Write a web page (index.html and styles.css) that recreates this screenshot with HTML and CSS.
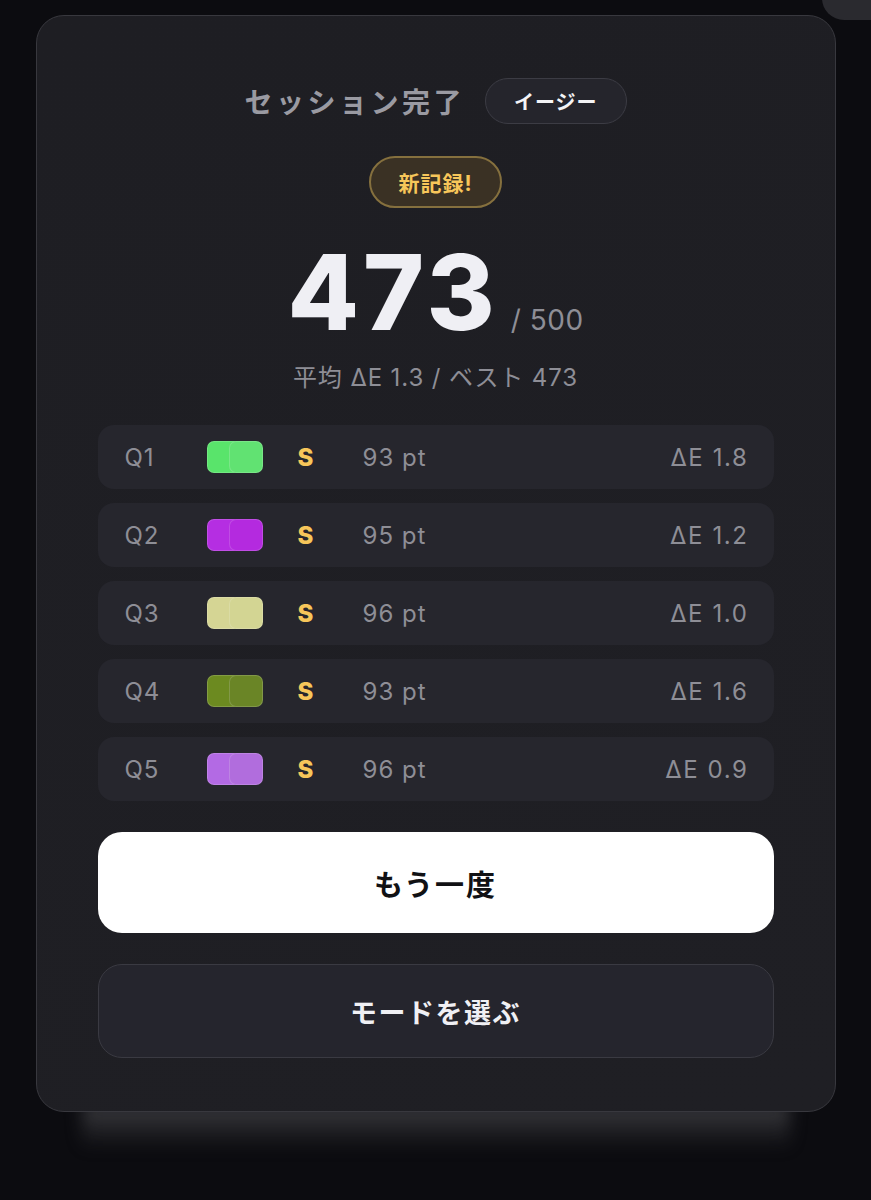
FILE: index.html
```html
<!DOCTYPE html>
<html lang="ja">
<head>
<meta charset="utf-8">
<title>セッション完了</title>
<link rel="stylesheet" href="styles.css">
</head>
<body>
<div class="corner-btn"></div>
<main class="page">
  <section class="card">
    <header class="head">
      <h1 class="title">セッション完了</h1>
      <span class="mode">イージー</span>
    </header>
    <div class="record">新記録!</div>
    <div class="score"><span class="big">473</span><span class="max">/ 500</span></div>
    <p class="sub">平均 ΔE 1.3 / ベスト 473</p>
    <ul class="rows">
      <li class="row"><span class="q">Q1</span><span class="sw"><i style="background:#59e46b"></i><i style="background:#61e272"></i></span><span class="grade">S</span><span class="pt">93 pt</span><span class="de">ΔE 1.8</span></li>
      <li class="row"><span class="q">Q2</span><span class="sw"><i style="background:#b52ee2"></i><i style="background:#b42adf"></i></span><span class="grade">S</span><span class="pt">95 pt</span><span class="de">ΔE 1.2</span></li>
      <li class="row"><span class="q">Q3</span><span class="sw"><i style="background:#d5d594"></i><i style="background:#d3d593"></i></span><span class="grade">S</span><span class="pt">96 pt</span><span class="de">ΔE 1.0</span></li>
      <li class="row"><span class="q">Q4</span><span class="sw"><i style="background:#6c8a20"></i><i style="background:#6a8526"></i></span><span class="grade">S</span><span class="pt">93 pt</span><span class="de">ΔE 1.6</span></li>
      <li class="row"><span class="q">Q5</span><span class="sw"><i style="background:#b36ae4"></i><i style="background:#b16ddd"></i></span><span class="grade">S</span><span class="pt">96 pt</span><span class="de">ΔE 0.9</span></li>
    </ul>
    <button class="btn primary">もう一度</button>
    <button class="btn secondary">モードを選ぶ</button>
  </section>
</main>
</body>
</html>
```
FILE: styles.css
```css
* { box-sizing: border-box; }
html, body { margin: 0; padding: 0; }
body {
  background: #0c0c10;
  font-family: "Inter", "Noto Sans CJK JP", sans-serif;
  color: #ededf2;
  width: 871px;
  height: 1200px;
  overflow: hidden;
  position: relative;
}
.corner-btn {
  position: absolute;
  left: 822px;
  top: -40px;
  width: 90px;
  height: 60px;
  border-radius: 22px;
  background: #2a2a2f;
}
.page {
  padding-top: 15px;
  display: flex;
  justify-content: center;
}
.card {
  position: relative;
  width: 800px;
  background: linear-gradient(160deg, #1e1e23 0%, #1f1f24 100%);
  border: 1px solid #38383e;
  border-radius: 28px;
  padding: 62px 61px 53px;
  display: flex;
  flex-direction: column;
  align-items: center;
}
.card::after {
  content: "";
  position: absolute;
  left: 45px;
  right: 45px;
  bottom: -38px;
  height: 46px;
  background: linear-gradient(#3c3c40, rgba(30,30,34,0));
  filter: blur(8px);
  z-index: -1;
}
.head {
  display: flex;
  align-items: center;
  gap: 20px;
  height: 46px;
}
.title {
  margin: 0;
  font-size: 28px;
  font-weight: 700;
  color: #9a9aa2;
  letter-spacing: 3.5px;
}
.mode {
  height: 46px;
  padding: 0 28px;
  border: 1.5px solid #3c3c44;
  background: #25252c;
  border-radius: 23px;
  display: flex;
  align-items: center;
  font-size: 20px;
  font-weight: 700;
  letter-spacing: 1px;
  color: #f4f4f6;
}
.record {
  margin-top: 32px;
  height: 52px;
  padding: 0 27px;
  border: 2px solid #85703e;
  background: #3a3124;
  border-radius: 26px;
  display: flex;
  align-items: center;
  font-size: 21px;
  font-weight: 700;
  letter-spacing: 1px;
  color: #f7c65a;
}
.score {
  margin-top: 32px;
  display: flex;
  align-items: baseline;
  gap: 12px;
  line-height: 1;
  height: 104px;
}
.big {
  font-size: 104px;
  font-weight: 800;
  letter-spacing: 4px;
  color: #efeff4;
}
.max {
  font-size: 28px;
  letter-spacing: 0.5px;
  color: #8e8e96;
}
.sub {
  margin: 18px 0 0;
  font-size: 24px;
  line-height: 32px;
  letter-spacing: 0.9px;
  color: #8e8e96;
}
.rows {
  list-style: none;
  margin: 31px 0 0;
  padding: 0;
  width: 100%;
  display: flex;
  flex-direction: column;
  gap: 14px;
}
.row {
  height: 64px;
  background: #26262d;
  border-radius: 16px;
  display: flex;
  align-items: center;
  padding: 0 27px;
  font-size: 24px;
  letter-spacing: 1px;
  color: #8e8e96;
}
.q { width: 82px; }
.sw { display: flex; width: 91px; }
.sw i {
  display: block;
  width: 34px;
  height: 32px;
  border-radius: 7px;
  border: 1.5px solid rgba(255,255,255,0.16);
}
.sw i + i { margin-left: -12px; }
.grade {
  width: 65px;
  font-weight: 800;
  color: #f7c65a;
}
.pt { flex: 1; }
.de { text-align: right; letter-spacing: 1.6px; margin-right: -2px; }
.btn {
  width: 100%;
  font-family: inherit;
  font-weight: 700;
  cursor: pointer;
}
.primary {
  margin-top: 31px;
  height: 101px;
  border: none;
  border-radius: 24px;
  background: #ffffff;
  color: #111114;
  font-size: 29px;
  letter-spacing: 2px;
}
.secondary {
  margin-top: 31px;
  height: 94px;
  border: 1.5px solid #3a3a42;
  border-radius: 24px;
  background: #25252d;
  color: #f0f0f4;
  font-size: 27px;
  letter-spacing: 1.5px;
}
```
